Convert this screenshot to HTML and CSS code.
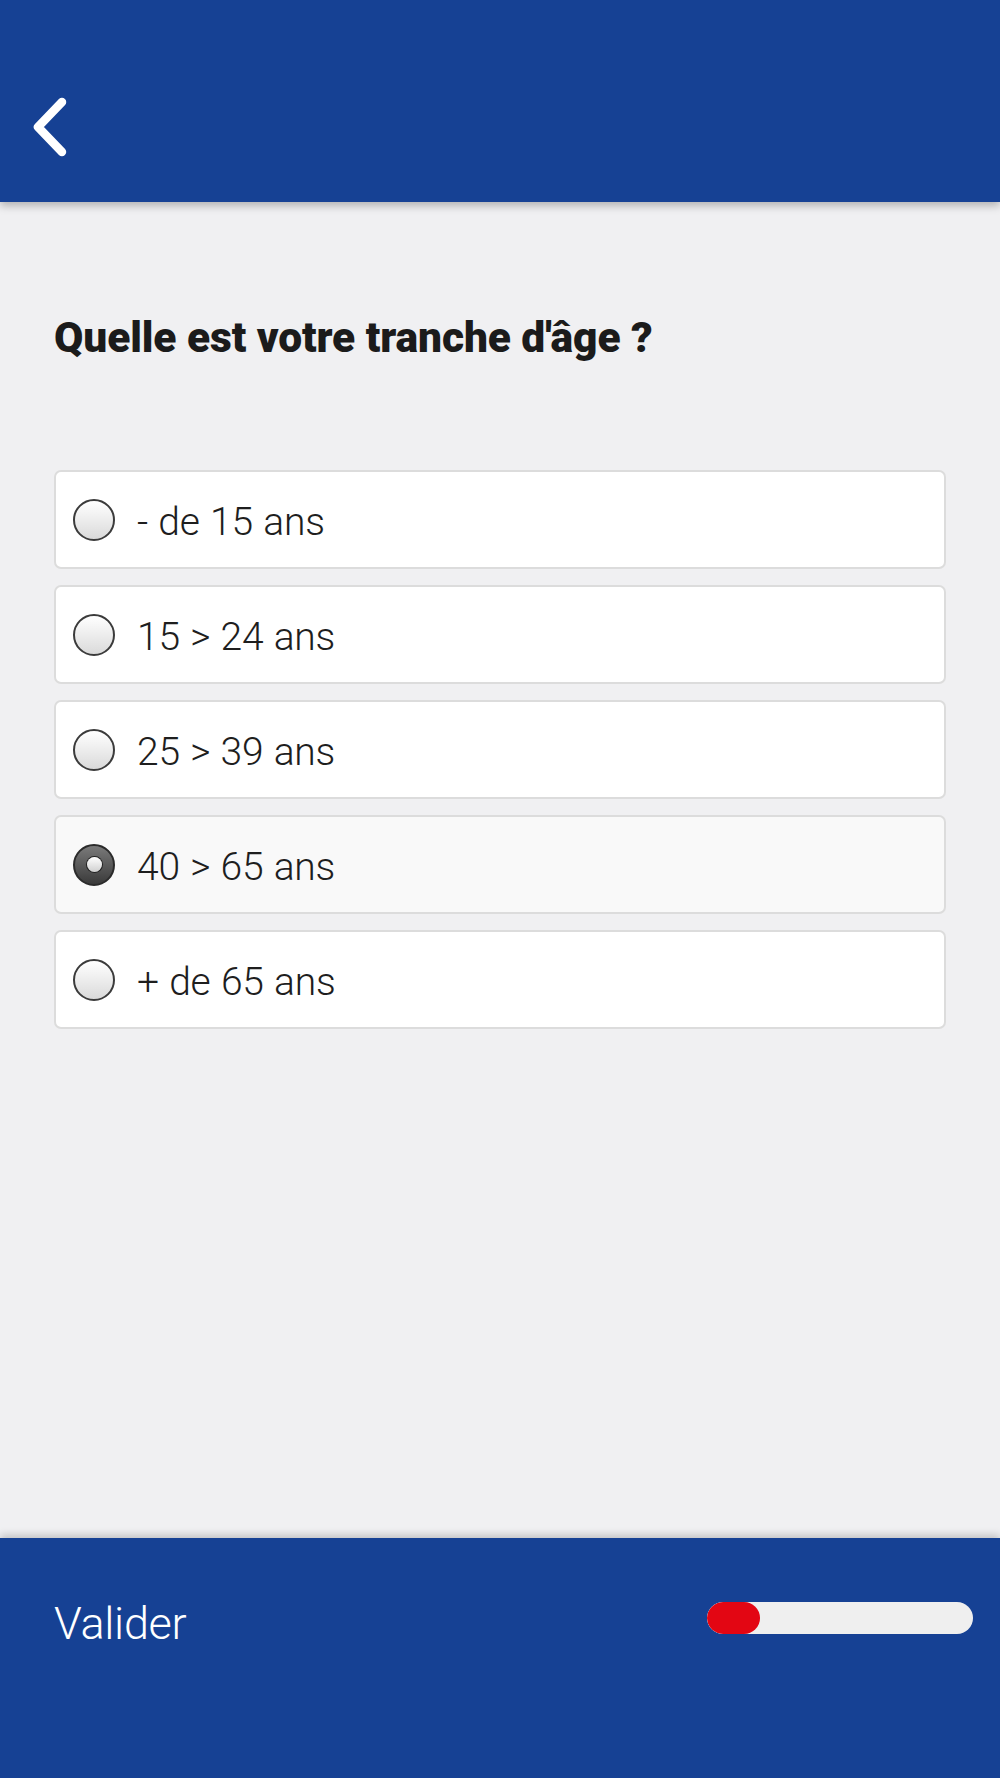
FILE: index.html
```html
<!DOCTYPE html>
<html lang="fr">
<head>
<meta charset="utf-8">
<title>Tranche d'âge</title>
<link rel="stylesheet" href="styles.css">
</head>
<body>
<div class="app">
  <header class="topbar">
    <button class="back" aria-label="Retour">
      <svg width="80" height="90" viewBox="20 80 80 90">
        <polyline points="62,102 38,127 62,152" fill="none" stroke="#fff" stroke-width="8.5" stroke-linecap="round" stroke-linejoin="round"/>
      </svg>
    </button>
  </header>
  <main class="content">
    <h1 class="question">Quelle est votre tranche d'âge ?</h1>
    <div class="options">
      <label class="option"><span class="radio"></span><span class="label">- de 15 ans</span></label>
      <label class="option"><span class="radio"></span><span class="label">15 &gt; 24 ans</span></label>
      <label class="option"><span class="radio"></span><span class="label">25 &gt; 39 ans</span></label>
      <label class="option selected"><span class="radio checked"></span><span class="label">40 &gt; 65 ans</span></label>
      <label class="option"><span class="radio"></span><span class="label">+ de 65 ans</span></label>
    </div>
  </main>
  <footer class="bottombar">
    <span class="validate">Valider</span>
    <div class="progress"><div class="progress-fill" style="width:53px"></div></div>
  </footer>
</div>
</body>
</html>
```
FILE: styles.css
```css
html, body {
  margin: 0;
  padding: 0;
}
body {
  background: #f0f0f2;
  font-family: Roboto, "Liberation Sans", sans-serif;
}
.app {
  min-height: 1778px;
  display: flex;
  flex-direction: column;
}
.topbar {
  height: 202px;
  background: #164194;
  box-shadow: 0 4px 8px rgba(0,0,0,0.25);
  position: relative;
  z-index: 2;
}
.back {
  display: block;
  margin: 0;
  padding: 0;
  border: 0;
  background: none;
  width: 80px;
  height: 90px;
  margin-left: 20px;
  margin-top: 80px;
}
.back svg { display: block; }
.content {
  flex: 1;
  padding: 0 54px;
}
.question {
  margin: 0;
  margin-top: 110px;
  font-family: Roboto, sans-serif;
  font-weight: 900;
  font-size: 42.5px;
  line-height: 52px;
  color: #1b1b1b;
  letter-spacing: -0.1px;
}
.options {
  margin-top: 106px;
  display: flex;
  flex-direction: column;
  gap: 16px;
}
.option {
  box-sizing: border-box;
  height: 99px;
  width: 892px;
  background: #fff;
  border: 2px solid #dcdcdc;
  border-radius: 7px;
  display: flex;
  align-items: center;
  padding-left: 17px;
}
.option.selected {
  background: #f9f9f9;
}
.radio {
  box-sizing: border-box;
  width: 42px;
  height: 42px;
  border-radius: 50%;
  border: 2.5px solid #3b3b3b;
  background: linear-gradient(#ffffff, #dadada);
  flex: none;
  position: relative;
}
.radio.checked {
  border-color: #2b2b2b;
  background: linear-gradient(#7a7a7a, #3a3a3a);
}
.radio.checked::after {
  content: "";
  position: absolute;
  left: 50%;
  top: 50%;
  width: 15px;
  height: 15px;
  margin: -7.5px 0 0 -7.5px;
  border-radius: 50%;
  background: linear-gradient(#ffffff, #cfcfcf);
  box-shadow: 0 0 0 1px #222;
}
.label {
  margin-left: 22px;
  margin-top: 5px;
  font-family: Roboto, sans-serif;
  font-weight: 300;
  font-size: 39px;
  letter-spacing: -0.2px;
  word-spacing: 1px;
  color: #1e1e1e;
}
.bottombar {
  height: 240px;
  background: #164194;
  box-shadow: 0 -3px 8px rgba(0,0,0,0.2);
  display: flex;
  align-items: flex-start;
  justify-content: space-between;
  padding: 0 27px 0 54px;
  box-sizing: border-box;
}
.validate {
  margin-top: 60px;
  font-family: Roboto, sans-serif;
  font-weight: 300;
  font-size: 45px;
  letter-spacing: -0.3px;
  color: #fff;
  line-height: 52px;
}
.progress {
  margin-top: 64px;
  width: 266px;
  height: 32px;
  border-radius: 16px;
  background: #efefef;
  overflow: hidden;
}
.progress-fill {
  height: 100%;
  background: #e30613;
  border-radius: 16px;
}
```
